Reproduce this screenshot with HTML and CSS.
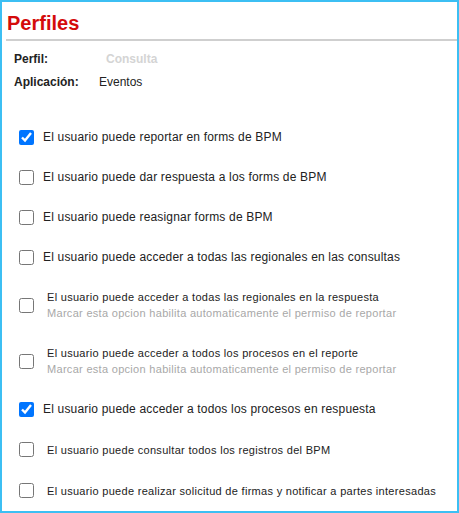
FILE: index.html
```html
<!DOCTYPE html>
<html lang="es">
<head>
  <meta charset="UTF-8" />
  <title>Perfiles</title>
  <link rel="stylesheet" href="styles.css">
</head>
<body>
  <div class="panel">
    <h1 class="title">Perfiles</h1>

    <div class="info">
      <span class="info-label">Perfil:</span>
      <span class="info-value muted">Consulta</span>
      <span class="info-label">Aplicación:</span>
      <span class="info-value">Eventos</span>
    </div>

    <ul class="perms">
      <li class="perm">
        <input type="checkbox" id="p1" checked />
        <label for="p1">El usuario puede reportar en forms de BPM</label>
      </li>
      <li class="perm">
        <input type="checkbox" id="p2" />
        <label for="p2">El usuario puede dar respuesta a los forms de BPM</label>
      </li>
      <li class="perm">
        <input type="checkbox" id="p3" />
        <label for="p3">El usuario puede reasignar forms de BPM</label>
      </li>
      <li class="perm">
        <input type="checkbox" id="p4" />
        <label for="p4">El usuario puede acceder a todas las regionales en las consultas</label>
      </li>
      <li class="perm small double">
        <input type="checkbox" id="p5" />
        <label for="p5">
          El usuario puede acceder a todas las regionales en la respuesta
          <span class="hint">Marcar esta opcion habilita automaticamente el permiso de reportar</span>
        </label>
      </li>
      <li class="perm small double">
        <input type="checkbox" id="p6" />
        <label for="p6">
          El usuario puede acceder a todos los procesos en el reporte
          <span class="hint">Marcar esta opcion habilita automaticamente el permiso de reportar</span>
        </label>
      </li>
      <li class="perm">
        <input type="checkbox" id="p7" checked />
        <label for="p7">El usuario puede acceder a todos los procesos en respuesta</label>
      </li>
      <li class="perm small">
        <input type="checkbox" id="p8" />
        <label for="p8">El usuario puede consultar todos los registros del BPM</label>
      </li>
      <li class="perm small">
        <input type="checkbox" id="p9" />
        <label for="p9">El usuario puede realizar solicitud de firmas y notificar a partes interesadas</label>
      </li>
    </ul>
  </div>
</body>
</html>
```

FILE: styles.css
```css
:root {
  --frame: #3cbff3;
  --red: #d40b0b;
  --text: #222222;
  --muted: #d4d4d4;
  --hint: #a8a8a8;
  --rule: #cfcfcf;
}
* {
  box-sizing: border-box;
}
body {
  margin: 0;
  font-family: 'Liberation Sans', Arial, sans-serif;
  color: var(--text);
  background: #ffffff;
}
.panel {
  width: 459px;
  height: 513px;
  border: 2px solid var(--frame);
  background: #ffffff;
  overflow: hidden;
}
.title {
  margin: 0 0 0 4px;
  padding: 9px 0 4px 1px;
  font-size: 20px;
  line-height: 24px;
  font-weight: bold;
  color: var(--red);
  border-bottom: 2px solid var(--rule);
}
.info {
  display: grid;
  grid-template-columns: 85px auto;
  padding: 7px 0 0 12px;
  font-size: 12px;
  line-height: 23px;
}
.info-label {
  font-weight: bold;
}
.info-value.muted {
  color: var(--muted);
  font-weight: bold;
  padding-left: 7px;
}
.perms {
  list-style: none;
  margin: 0;
  padding: 23px 0 0 17px;
}
.perm {
  display: flex;
  align-items: center;
  height: 40px;
  font-size: 12px;
  letter-spacing: 0.18px;
}
.perm.double {
  height: 56px;
}
.perm input {
  width: 15px;
  height: 15px;
  margin: 0 9px 0 0;
  flex-shrink: 0;
}
.perm.small {
  height: 41px;
  font-size: 11px;
  letter-spacing: 0.3px;
}
.perm.small.double {
  height: 56px;
}
.perm.small input {
  margin-right: 13px;
}
.perm label {
  line-height: 16px;
}
.hint {
  display: block;
  color: var(--hint);
}
```
